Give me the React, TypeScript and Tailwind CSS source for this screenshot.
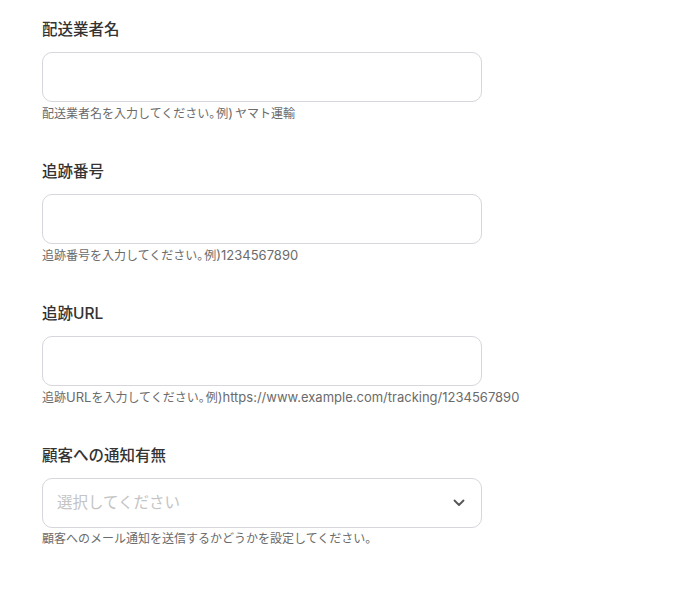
import React from "react";

const font = { fontFamily: 'Inter, "Noto Sans CJK JP", "Noto Sans", sans-serif' };

function L({ children }: { children: React.ReactNode }) {
  return <span className="text-[13px]">{children}</span>;
}

function Maru() {
  return <span className="tracking-[-5px]">。</span>;
}

function Field({ label, help, select }: { label: React.ReactNode; help: React.ReactNode; select?: boolean }) {
  return (
    <div className="flex flex-col">
      <div className="text-[15.5px] leading-[20px] font-medium text-[#333]">{label}</div>
      {select ? (
        <div className="mt-3 h-[50px] w-[440px] rounded-[10px] border border-[#d6d6dc] bg-white flex items-center justify-between pl-[14px] pr-[16px]">
          <span className="text-[15.5px] text-[#c4c4c4]">選択してください</span>
          <svg width="12" height="8" viewBox="0 0 12 8" fill="none">
            <path d="M1.5 1.5L6 6L10.5 1.5" stroke="#555" strokeWidth="1.8" strokeLinecap="round" strokeLinejoin="round" />
          </svg>
        </div>
      ) : (
        <div className="mt-3 h-[50px] w-[440px] rounded-[10px] border border-[#d6d6dc] bg-white" />
      )}
      <div className="mt-[3px] h-[16px] text-[12px] leading-[16px] text-[#6b6b6b] whitespace-nowrap">{help}</div>
    </div>
  );
}

export default function App() {
  return (
    <div className="min-h-[592px] w-[699px] bg-white pl-[42px] pt-[20px] flex flex-col gap-[41px]" style={font}>
      <Field
        label="配送業者名"
        help={<>配送業者名を入力してください<Maru />例<L>)</L><span className="ml-[2px]">ヤマト運輸</span></>}
      />
      <Field
        label="追跡番号"
        help={<>追跡番号を入力してください<Maru />例<L>)1234567890</L></>}
      />
      <Field
        label="追跡URL"
        help={<>追跡<L>URL</L>を入力してください<Maru />例<L>)https://www.example.com/tracking/1234567890</L></>}
      />
      <Field label="顧客への通知有無" help="顧客へのメール通知を送信するかどうかを設定してください。" select />
    </div>
  );
}
